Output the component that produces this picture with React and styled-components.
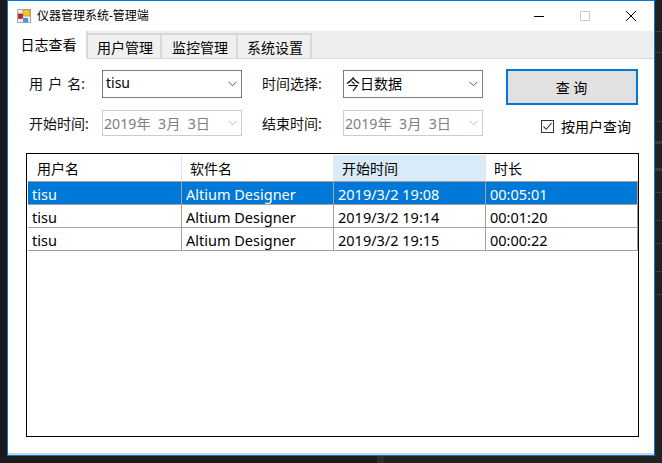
import styled, { createGlobalStyle } from "styled-components"

const Global = createGlobalStyle`
  html, body { margin: 0; padding: 0; background: #1a1a1a; overflow: hidden; }
  * { box-sizing: border-box; }
`

// thin separators of the dark editor behind the window, right of it
const bgLines = [[31, 1], [52, 1], [121, 1], [141, 3], [168, 3], [192, 1], [220, 1], [243, 1], [271, 1], [294, 1]]
  .map(([y, h]) => `linear-gradient(#3a3a3a, #3a3a3a) right 0 top ${y}px / 7px ${h}px no-repeat`)
  .join(", ")

const Desktop = styled.div`
  width: 662px;
  height: 463px;
  padding-left: 7px;
  background:
    ${bgLines},
    linear-gradient(#2e2e2e, #2e2e2e) left 377px bottom 0 / 7px 7px no-repeat,
    linear-gradient(#222, #222) right 0 top 0 / 278px 463px no-repeat,
    #1a1a1a;
  font-family: "Noto Sans", "Noto Sans CJK SC", sans-serif;
  color: #000;
`

const Window = styled.div`
  width: 648px;
  height: 456px;
  display: flex;
  flex-direction: column;
  background: #fff;
  border: 1px solid #0078d7;
`

const TitleBar = styled.div`
  height: 30px;
  display: flex;
  align-items: center;
  padding-left: 9px;
  flex: none;
`

const Title = styled.span`
  margin-left: 5px;
  font-size: 12px;
  line-height: 16px;
`

const WinButtons = styled.div`
  margin-left: auto;
  display: flex;
`

const WinButton = styled.div`
  width: 46px;
  height: 30px;
  display: flex;
  align-items: center;
  justify-content: center;
`

const TabStrip = styled.div`
  height: 28px;
  flex: none;
  display: flex;
  align-items: flex-end;
  background: #eeeeee;
  border-bottom: 1px solid #d9d9d9;
`

const Tab = styled.div`
  width: ${p => p.$w}px;
  height: ${p => (p.$active ? 28 : 26)}px;
  margin-bottom: -1px;
  display: flex;
  align-items: center;
  justify-content: center;
  padding-bottom: ${p => (p.$active ? 3 : 0)}px;
  padding-left: ${p => (p.$active ? 3 : 2)}px;
  font-size: 14px;
  background: ${p => (p.$active ? "#fff" : "#f0f0f0")};
  border-top: ${p => (p.$active ? "none" : "2px solid #d9d9d9")};
  border-right: 2px solid #d9d9d9;
  border-bottom: ${p => (p.$active ? "none" : "1px solid #d9d9d9")};
`

const Body = styled.div`
  flex: 1;
  display: flex;
  flex-direction: column;
  padding: 11px 0 0 18px;
  border-bottom: 2px solid #d4d4d4;
`

const Form = styled.div`
  display: grid;
  grid-template-columns: 76px 140px 20px 81px 140px 23px 132px;
  grid-template-rows: 28px 26px;
  row-gap: 12px;
`

const Label = styled.label`
  display: flex;
  align-items: center;
  padding-left: ${p => p.$pad || 0}px;
  padding-bottom: ${p => (p.$top ? 3 : 1)}px;
  font-size: 14px;
  word-spacing: ${p => p.$spread || 0}px;
  color: #111;
  white-space: pre;
`

const Select = styled.div`
  height: ${p => (p.$disabled ? 26 : 28)}px;
  display: flex;
  align-items: center;
  justify-content: space-between;
  padding: 0 4px ${p => (p.$disabled ? 1 : 3)}px ${p => p.$pad}px;
  font-size: ${p => p.$size || 14}px;
  color: ${p => (p.$disabled ? "#808080" : "#000")};
  border: 1px solid ${p => (p.$disabled ? "#cccccc" : "#7a7a7a")};
  background: #fff;
  white-space: pre;
  svg { margin-top: ${p => (p.$disabled ? 1 : 3)}px; }
`

const QueryButton = styled.button`
  grid-row: 1;
  grid-column: 7;
  height: 36px;
  margin-top: -1px;
  padding: 0 1px 0 0;
  font: inherit;
  font-size: 14px;
  color: #000;
  background: #e1e1e1;
  border: 2px solid #0078d7;
  white-space: pre;
`

const CheckRow = styled.div`
  grid-row: 2;
  grid-column: 7;
  display: flex;
  align-items: center;
  gap: 7px;
  padding: 6px 0 0 35px;
  font-size: 14px;
  white-space: nowrap;
`

const CheckBox = styled.span`
  width: 13px;
  height: 13px;
  flex: none;
  display: flex;
  border: 1px solid #333;
`

const Table = styled.div`
  height: 284px;
  width: 613px;
  margin-top: 17px;
  padding: 1px 0 0 1px;
  border: 1px solid #000;
  background: #fff;
  font-size: 14.5px;
`

const Row = styled.div`
  display: grid;
  grid-template-columns: 154px 152px 152px 152px;
  height: ${p => (p.$head ? 27 : 23)}px;
  border-bottom: 1px solid #a0a0a0;
  background: ${p => (p.$selected ? "#0078d7" : "#fff")};
  color: ${p => (p.$selected ? "#fff" : "#000")};
`

const HeadCell = styled.div`
  display: flex;
  align-items: center;
  padding-left: ${p => (p.$first ? 9 : 8)}px;
  background: ${p => (p.$sorted ? "#d9ebf9" : "#fff")};
  border-right: 1px solid #e5e5e5;
  font-size: 14px;
  &:last-child { border-right: none; }
`

const Cell = styled.div`
  display: flex;
  align-items: center;
  padding: 1px 0 0 4px;
  border-right: 1px solid #a0a0a0;
`

const AppIcon = () => (
  <svg width="15" height="15" viewBox="0 0 15 15">
    <rect x="0.5" y="0.5" width="13" height="13" fill="#ececec" stroke="#a8a8a8" />
    <rect x="6" y="1" width="7" height="6" fill="#f4c430" stroke="#b48a10" strokeWidth="0.6" />
    <rect x="1.5" y="5" width="4" height="4.5" fill="#d02020" stroke="#801010" strokeWidth="0.6" />
    <rect x="6" y="9" width="5" height="4" fill="#4a8fe0" />
  </svg>
)

const Chevron = ({ color }) => (
  <svg width="9" height="6" viewBox="0 0 9 6" fill="none">
    <path d="M0.5 0.8 L4.5 4.8 L8.5 0.8" stroke={color} strokeWidth="1" />
  </svg>
)

const rows = [
  ["2019/3/2 19:08", "00:05:01"],
  ["2019/3/2 19:14", "00:01:20"],
  ["2019/3/2 19:15", "00:00:22"],
]

export default function App() {
  return (
    <Desktop>
      <Global />
      <Window>
        <TitleBar>
          <AppIcon />
          <Title>仪器管理系统-管理端</Title>
          <WinButtons>
            <WinButton>
              <svg width="10" height="10" viewBox="0 0 10 10"><path d="M0 5.5H10" stroke="#000" /></svg>
            </WinButton>
            <WinButton>
              <svg width="10" height="10" viewBox="0 0 10 10"><rect x=".5" y=".5" width="9" height="9" fill="none" stroke="#ccc" /></svg>
            </WinButton>
            <WinButton>
              <svg width="10" height="10" viewBox="0 0 10 10"><path d="M0 0L10 10M10 0L0 10" stroke="#000" /></svg>
            </WinButton>
          </WinButtons>
        </TitleBar>
        <TabStrip>
          <Tab $w={80} $active>日志查看</Tab>
          <Tab $w={74}>用户管理</Tab>
          <Tab $w={76}>监控管理</Tab>
          <Tab $w={74}>系统设置</Tab>
        </TabStrip>
        <Body>
          <Form>
            <Label $top $pad={3} $spread={1.5}>{"用 户 名:"}</Label>
            <Select $pad={3}>tisu<Chevron color="#555" /></Select>
            <span />
            <Label $top>时间选择:</Label>
            <Select $pad={2}>今日数据<Chevron color="#555" /></Select>
            <span />
            <QueryButton>{"查 询"}</QueryButton>
            <Label $pad={3}>开始时间:</Label>
            <Select $disabled $pad={1} $size={14.2}>{"2019年  3月  3日"}<Chevron color="#bbb" /></Select>
            <span />
            <Label>结束时间:</Label>
            <Select $disabled $pad={1} $size={14.2}>{"2019年  3月  3日"}<Chevron color="#bbb" /></Select>
            <span />
            <CheckRow>
              <CheckBox>
                <svg width="11" height="11" viewBox="0 0 11 11" fill="none"><path d="M1.5 5.5L4.2 8.3L9.5 2.2" stroke="#333" strokeWidth="1.1" /></svg>
              </CheckBox>
              按用户查询
            </CheckRow>
          </Form>
          <Table>
            <Row $head>
              <HeadCell $first>用户名</HeadCell>
              <HeadCell>软件名</HeadCell>
              <HeadCell $sorted>开始时间</HeadCell>
              <HeadCell>时长</HeadCell>
            </Row>
            {rows.map((r, i) => (
              <Row key={r[0]} $selected={i === 0}>
                <Cell>tisu</Cell>
                <Cell>Altium Designer</Cell>
                <Cell>{r[0]}</Cell>
                <Cell>{r[1]}</Cell>
              </Row>
            ))}
          </Table>
        </Body>
      </Window>
    </Desktop>
  )
}
